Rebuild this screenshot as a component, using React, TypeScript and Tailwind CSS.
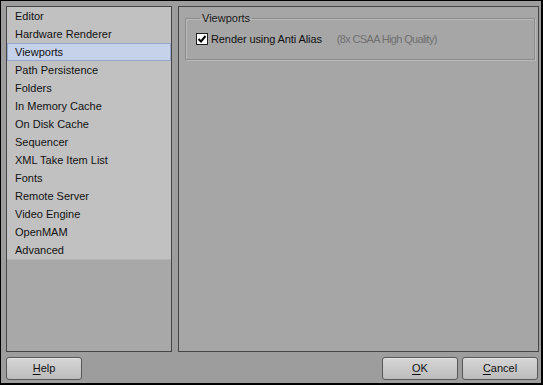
import React from 'react';

const items = [
  'Editor',
  'Hardware Renderer',
  'Viewports',
  'Path Persistence',
  'Folders',
  'In Memory Cache',
  'On Disk Cache',
  'Sequencer',
  'XML Take Item List',
  'Fonts',
  'Remote Server',
  'Video Engine',
  'OpenMAM',
  'Advanced',
];

const DialogButton: React.FC<{ label: string }> = ({ label }) => (
  <button className="w-[76px] h-[23px] rounded-[3px] border border-[#575757] bg-gradient-to-b from-[#d6d6d6] to-[#bcbcbc] text-[11px] text-[#111] flex items-center justify-center shadow-[inset_0_1px_0_#e6e6e6]">
    <span>
      <span className="underline underline-offset-2">{label[0]}</span>
      {label.slice(1)}
    </span>
  </button>
);

export default function App() {
  const [selected, setSelected] = React.useState('Viewports');
  const [antiAlias, setAntiAlias] = React.useState(true);

  return (
    <div className="w-[543px] h-[385px] bg-[#9d9d9d] border-t border-l border-r-2 border-b-2 border-black flex flex-col font-['Liberation_Sans',Arial,sans-serif] text-[11px] text-[#111] select-none">
      <div className="flex pt-[5px] pl-[5px] pr-[2px] gap-[6px]">
        {/* category list */}
        <div className="w-[166px] h-[346px] border border-[#464646] bg-[#a8a8a8] flex flex-col">
          <div className="bg-[#c1c1c1] border-b border-[#b4b4b4]">
            {items.map(item => (
              <div
                key={item}
                onClick={() => setSelected(item)}
                className={`h-[18px] flex items-center pl-[7px] border ${
                  selected === item
                    ? 'bg-[#c5d2ea] border-[#95a7cc]'
                    : 'border-transparent'
                }`}
              >
                {item}
              </div>
            ))}
          </div>
        </div>

        {/* settings page */}
        <div className="w-[361px] h-[346px] border border-[#464646] bg-[#a6a6a6] pl-[6px] pr-[3px] pt-[5px]">
          <fieldset className="border border-[#8c8c8c] shadow-[inset_1px_1px_0_#b9b9b9,1px_1px_0_#b9b9b9] h-[48px] pl-[10px] pr-[4px]">
            <legend className="ml-[4px] px-[2px] leading-[13px] text-[#1a1a1a]">Viewports</legend>
            <label
              className="flex items-center h-[20px] mt-[4px]"
              onClick={() => setAntiAlias(!antiAlias)}
            >
              <span className="w-[12px] h-[12px] border border-[#1e1e1e] bg-white flex items-center justify-center mr-[3px]">
                {antiAlias && (
                  <svg width="10" height="10" viewBox="0 0 10 10">
                    <path d="M1.5 5 L4 7.5 L8.5 2" fill="none" stroke="#000" strokeWidth="2" />
                  </svg>
                )}
              </span>
              <span className="tracking-[-0.1px]">Render using Anti Alias</span>
              <span className="ml-[15px] text-[#707070] tracking-[-0.65px]">(8x CSAA High Quality)</span>
            </label>
          </fieldset>
        </div>
      </div>

      {/* buttons */}
      <div className="flex mt-[5px] pl-[5px] pr-[3px]">
        <DialogButton label="Help" />
        <div className="flex-1" />
        <div className="flex gap-[4px]">
          <DialogButton label="OK" />
          <DialogButton label="Cancel" />
        </div>
      </div>
    </div>
  );
}
